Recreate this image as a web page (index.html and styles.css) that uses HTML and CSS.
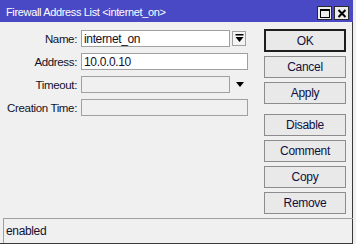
FILE: index.html
```html
<!DOCTYPE html>
<html lang="en">
<head>
  <title>Firewall Address List</title>
  <link rel="stylesheet" href="styles.css">
</head>
<body>
  <div class="window">

    <div class="titlebar">
      <span class="title">Firewall Address List &lt;internet_on&gt;</span>
      <div class="winbtns">
        <span class="wbtn">
          <svg width="12" height="11" viewBox="0 0 12 11"><rect x="1.5" y="1.5" width="9" height="8" fill="none" stroke="#000" stroke-width="1"/><rect x="1" y="1" width="10" height="2" fill="#000"/></svg>
        </span>
        <span class="wbtn">
          <svg width="12" height="11" viewBox="0 0 12 11"><path d="M2.5 2 L9.5 9 M9.5 2 L2.5 9" stroke="#000" stroke-width="2"/></svg>
        </span>
      </div>
    </div>

    <div class="content">
      <div class="form">
        <div class="row">
          <span class="label">Name:</span>
          <div class="field short">internet_on</div>
          <span class="ddbtn">
            <svg width="9" height="9" viewBox="0 0 9 9"><rect x="0.5" y="0" width="8" height="1.5" fill="#000"/><path d="M0.5 3 H8.5 L4.5 8 Z" fill="#000"/></svg>
          </span>
        </div>
        <div class="row">
          <span class="label">Address:</span>
          <div class="field">10.0.0.10</div>
        </div>
        <div class="row">
          <span class="label">Timeout:</span>
          <div class="field short disabled"></div>
          <span class="arrow"></span>
        </div>
        <div class="row">
          <span class="label">Creation Time:</span>
          <div class="field disabled"></div>
        </div>
      </div>

      <div class="actions">
        <button class="btn default">OK</button>
        <button class="btn">Cancel</button>
        <button class="btn">Apply</button>
        <button class="btn spaced">Disable</button>
        <button class="btn">Comment</button>
        <button class="btn">Copy</button>
        <button class="btn">Remove</button>
      </div>
    </div>

    <div class="status">
      <div class="statusbox">enabled</div>
    </div>

  </div>
</body>
</html>
```

FILE: styles.css
```css
body{
  margin: 0;
  font-family: "Liberation Sans", Arial, sans-serif;
  font-size: 11.5px;
  letter-spacing: -0.35px;
  color: #101028;
}

.window{
  width: 356px;
  height: 244px;
  box-sizing: border-box;
  background-color: #f0f0f0;
  border-right: 3px solid #f0f0f0;
  box-shadow: inset -1px -1px 0 #3a3a3a;
  display: flex;
  flex-direction: column;
}

.titlebar{
  height: 22px;
  background-color: #4949c6;
  display: flex;
  align-items: center;
  justify-content: space-between;
  padding-left: 6px;
}
.title{
  color: #fff;
  font-size: 11px;
  padding-top: 2px;
}
.winbtns{
  display: flex;
  gap: 2px;
  margin-right: 4px;
  padding-top: 4px;
}
.wbtn{
  width: 13px;
  height: 12px;
  background-color: #ececec;
  border: 1px solid #2a2a2a;
  display: flex;
  align-items: center;
  justify-content: center;
}

.content{
  flex: 1;
  display: grid;
  grid-template-columns: 260px 82px;
  padding: 8px 0 0 4px;
  align-items: start;
}

.form{
  display: flex;
  flex-direction: column;
  gap: 6px;
}
.row{
  display: flex;
  align-items: center;
  height: 17px;
}
.label{
  width: 73px;
  margin-right: 4px;
  text-align: right;
  white-space: nowrap;
}
.field{
  width: 167px;
  height: 17px;
  box-sizing: border-box;
  background-color: #fff;
  border: 1px solid #a0a0a0;
  padding: 1px 2px;
  font-size: 12px;
  line-height: 14px;
}
.field.short{
  width: 149px;
}
.field.disabled{
  background-color: #f0f0f0;
}
.ddbtn{
  width: 14px;
  height: 15px;
  box-sizing: border-box;
  margin-left: 2px;
  background-color: #f4f4f4;
  border: 1px solid #a0a0a0;
  display: flex;
  align-items: center;
  justify-content: center;
}
.arrow{
  margin-left: 6px;
  width: 0;
  height: 0;
  border-left: 4px solid transparent;
  border-right: 4px solid transparent;
  border-top: 5px solid #000;
}

.actions{
  display: flex;
  flex-direction: column;
  gap: 4px;
  margin-top: -1px;
}
.btn{
  height: 22px;
  box-sizing: border-box;
  background-color: #e9e9e9;
  border: 1px solid #8c8c8c;
  border-radius: 0;
  font-family: "Liberation Sans", Arial, sans-serif;
  font-size: 12px;
  letter-spacing: -0.3px;
  color: #101040;
  padding: 0;
}
.btn.default{
  height: 23px;
  border: 2px solid #1e1e1e;
}
.btn.spaced{
  margin-top: 6px;
}

.status{
  height: 24px;
  margin: 0 0 1px 3px;
  border-top: 1px solid #a0a0a0;
  border-left: 1px solid #a0a0a0;
  display: flex;
  align-items: center;
}
.statusbox{
  padding-left: 2px;
  font-size: 12px;
  color: #101030;
}
```
